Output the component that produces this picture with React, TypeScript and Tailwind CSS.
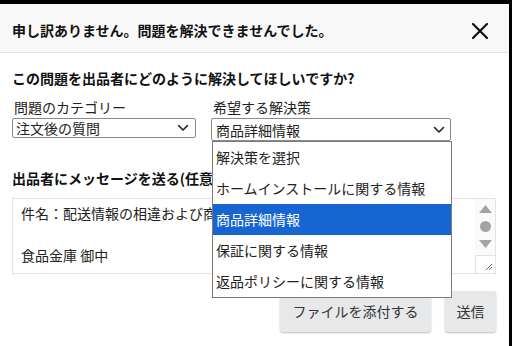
import React from "react";

const font = { fontFamily: '"Noto Sans CJK JP", "Noto Sans", sans-serif' };

function Chevron() {
  return (
    <svg width="12" height="8" viewBox="0 0 12 8" fill="none">
      <path d="M1.5 1.5 L6 6 L10.5 1.5" stroke="#222" strokeWidth="1.6" strokeLinecap="round" strokeLinejoin="round" />
    </svg>
  );
}

export default function App() {
  const items = [
    "解決策を選択",
    "ホームインストールに関する情報",
    "商品詳細情報",
    "保証に関する情報",
    "返品ポリシーに関する情報",
  ];
  return (
    <div className="w-[512px] h-[346px] bg-black overflow-hidden pt-[4px]" style={font}>
      <div className="w-[509px] h-[342px] bg-white flex flex-col text-[#222]">
        {/* Header */}
        <div className="h-[49px] shrink-0 bg-[#f8f8f8] border-b border-[#e2e2e2] flex items-center justify-between pl-[12px] pr-[20px] pt-[4px]">
          <div className="text-[14px] font-semibold text-[#111] leading-none">申し訳ありません。問題を解決できませんでした。</div>
          <svg width="18" height="18" viewBox="0 0 18 18" className="mt-[2px]">
            <path d="M2 2 L16 16 M16 2 L2 16" stroke="#111" strokeWidth="2.2" strokeLinecap="round" />
          </svg>
        </div>

        {/* Body */}
        <div className="px-[12px] pt-[15px] flex flex-col">
          <div className="text-[14px] font-bold leading-[20px] text-[#111]">この問題を出品者にどのように解決してほしいですか?</div>

          <div className="flex mt-[9px]">
            <div className="flex flex-col w-[199px]">
              <div className="text-[14px] leading-[20px] pl-[2px]">問題のカテゴリー</div>
              <div className="mt-[1px] w-[184px] h-[20px] border border-[#8a8a8a] rounded-[2px] flex items-center justify-between pl-[3px] pr-[6px] text-[14px] leading-none">
                <span>注文後の質問</span>
                <Chevron />
              </div>
            </div>
            <div className="flex flex-col relative">
              <div className="text-[14px] leading-[20px] pl-[2px]">希望する解決策</div>
              <div className="mt-[1px] w-[240px] h-[23px] border border-[#8a8a8a] rounded-[2px] flex items-center justify-between pl-[4px] pr-[5px] text-[14px] leading-none">
                <span>商品詳細情報</span>
                <Chevron />
              </div>
              <div className="absolute left-[1px] top-[44px] w-[240px] border border-[#7a7a7a] bg-white z-10">
                {items.map((t, i) => (
                  <div
                    key={t}
                    className={
                      i === 2
                        ? "h-[31px] flex items-center pl-[3px] text-[14px] bg-[#1765d1] text-white"
                        : "h-[31px] flex items-center pl-[3px] text-[14px] bg-white text-[#222]"
                    }
                  >
                    {t}
                  </div>
                ))}
              </div>
            </div>
          </div>

          <div className="text-[14px] font-bold leading-[20px] text-[#111] mt-[27px]">出品者にメッセージを送る(任意)</div>

          <div className="mt-[10px] w-[484px] h-[76px] border border-[#e3e3e3] flex">
            <div className="flex-1 pl-[8px] pt-[4px] text-[14px] leading-[21px] overflow-hidden whitespace-nowrap">
              <div>件名：配送情報の相違および商品詳細について</div>
              <div>&nbsp;</div>
              <div>食品金庫 御中</div>
            </div>
            <div className="w-[20px] flex flex-col bg-[#fafafa]">
              <div className="flex-1 flex flex-col items-center pt-[6px] gap-[8px]">
                <svg width="13" height="8" viewBox="0 0 13 8"><path d="M6.5 0 L13 8 L0 8 Z" fill="#a3a3a3" /></svg>
                <svg width="11" height="11" viewBox="0 0 11 11"><circle cx="5.5" cy="5.5" r="5.5" fill="#a3a3a3" /></svg>
                <svg width="13" height="8" viewBox="0 0 13 8"><path d="M0 0 L13 0 L6.5 8 Z" fill="#a3a3a3" /></svg>
              </div>
              <div className="h-[18px] border-t border-l border-[#e3e3e3] bg-white flex items-end justify-end pr-[2px] pb-[2px]">
                <svg width="8" height="8" viewBox="0 0 8 8"><path d="M7 1 L1 7 M7 4 L4 7" stroke="#666" strokeWidth="1" /></svg>
              </div>
            </div>
          </div>

          <div className="flex justify-end gap-[14px] mt-[17px] pr-[1px]">
            <div className="w-[151px] h-[41px] bg-[#e7e8ea] rounded-[3px] shadow-[0_1px_2px_rgba(0,0,0,0.25)] flex items-center justify-center text-[14px] text-[#333]">ファイルを添付する</div>
            <div className="w-[51px] h-[41px] bg-[#e7e8ea] rounded-[3px] shadow-[0_1px_2px_rgba(0,0,0,0.25)] flex items-center justify-center text-[14px] text-[#333]">送信</div>
          </div>
        </div>
      </div>
    </div>
  );
}
